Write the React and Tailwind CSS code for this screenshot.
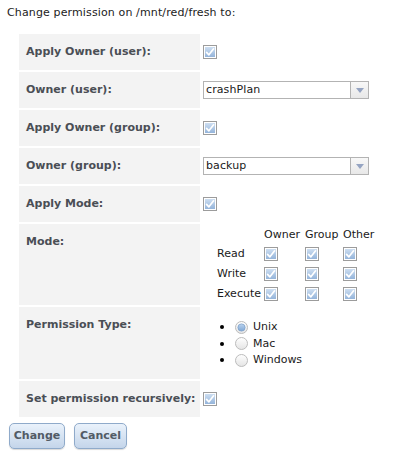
import React from "react";

const FONT = { fontFamily: '"DejaVu Sans", Verdana, sans-serif' };

function Check() {
  return (
    <svg width="14" height="14" viewBox="0 0 14 14" className="block shrink-0">
      <defs>
        <linearGradient id="cbg" x1="0" y1="0" x2="0" y2="1">
          <stop offset="0" stopColor="#cddef1" />
          <stop offset="1" stopColor="#94b4da" />
        </linearGradient>
      </defs>
      <rect x="0.5" y="0.5" width="13" height="13" fill="#fff" stroke="#9c9c9c" />
      <rect x="2" y="2" width="10" height="10" fill="url(#cbg)" />
      <path d="M3.6 7.4 L5.9 9.8 L10.6 3.8" stroke="#fff" strokeWidth="1.7" fill="none" strokeLinecap="round" strokeLinejoin="round" />
    </svg>
  );
}

function Radio({ on }) {
  return (
    <svg width="13" height="13" viewBox="0 0 13 13" className="block shrink-0">
      <defs>
        <linearGradient id="rbg" x1="0" y1="0" x2="0" y2="1">
          <stop offset="0" stopColor="#ffffff" />
          <stop offset="1" stopColor="#e4e4e4" />
        </linearGradient>
        <linearGradient id="rdot" x1="0" y1="0" x2="0" y2="1">
          <stop offset="0" stopColor="#bcd4ef" />
          <stop offset="1" stopColor="#7ea7d5" />
        </linearGradient>
      </defs>
      <circle cx="6.5" cy="6.5" r="6" fill="url(#rbg)" stroke="#bcbcbc" />
      {on && <circle cx="6.5" cy="6.5" r="3.6" fill="url(#rdot)" stroke="#7fa2cc" strokeWidth="0.8" />}
    </svg>
  );
}

function Select({ value }) {
  return (
    <div className="w-[166px] h-[18px] border border-[#b3b3b3] flex bg-white">
      <div className="flex-1 pl-[2px] text-[11px] leading-[16px] tracking-[0.1px] text-[#1a1a1a]">{value}</div>
      <div className="w-[18px] h-full border-l border-[#b3b3b3] bg-gradient-to-b from-[#f8f8f8] to-[#e8e8e8] flex items-center justify-center">
        <svg width="8" height="5" viewBox="0 0 8 5">
          <path d="M0 0 L8 0 L4 5 Z" fill="#95a4c2" />
        </svg>
      </div>
    </div>
  );
}

function Label({ children, h }) {
  return (
    <div className={`bg-[#f3f3f3] pl-[7px] pt-[11px] text-[11px] leading-[14px] font-bold text-[#4a4e55] ${h}`}>
      {children}
    </div>
  );
}

export default function App() {
  return (
    <div className="w-[399px] h-[461px] bg-white text-[#222]" style={FONT}>
      <div className="pl-[7px] pt-[6px] text-[11px] leading-[14px] tracking-[0.13px] text-[#222]">
        Change permission on /mnt/red/fresh to:
      </div>
      <div className="ml-[19px] mt-[14px] grid grid-cols-[181px_1fr] gap-[2px]">
        <Label h="h-[36px]">Apply Owner (user):</Label>
        <div className="flex items-center pl-[1px]"><Check /></div>

        <Label h="h-[36px]">Owner (user):</Label>
        <div className="flex items-center pl-[1px]"><Select value="crashPlan" /></div>

        <Label h="h-[36px]">Apply Owner (group):</Label>
        <div className="flex items-center pl-[1px]"><Check /></div>

        <Label h="h-[36px]">Owner (group):</Label>
        <div className="flex items-center pl-[1px]"><Select value="backup" /></div>

        <Label h="h-[36px]">Apply Mode:</Label>
        <div className="flex items-center pl-[1px]"><Check /></div>

        <Label h="h-[81px]">Mode:</Label>
        <div className="pl-[15px] pt-[2px]">
          <div className="grid grid-cols-[47px_41px_38px_auto] text-[11px] text-[#1a1a1a]">
            <div className="h-[18px]"></div>
            <div className="h-[18px] leading-[18px]">Owner</div>
            <div className="h-[18px] leading-[18px]">Group</div>
            <div className="h-[18px] leading-[18px]">Other</div>
            {["Read", "Write", "Execute"].map((r) => (
              <React.Fragment key={r}>
                <div className="h-[20px] flex items-center">{r}</div>
                <div className="h-[20px] flex items-center"><Check /></div>
                <div className="h-[20px] flex items-center"><Check /></div>
                <div className="h-[20px] flex items-center"><Check /></div>
              </React.Fragment>
            ))}
          </div>
        </div>

        <Label h="h-[72px]">Permission Type:</Label>
        <div className="pl-[18px] pt-[12px] text-[11px] text-[#1a1a1a]">
          {[["Unix", true], ["Mac", false], ["Windows", false]].map(([t, on]) => (
            <div key={t} className="h-[16.5px] flex items-center">
              <div className="w-[4px] h-[4px] rounded-full bg-black"></div>
              <div className="ml-[11px]"><Radio on={on} /></div>
              <div className="ml-[5px]">{t}</div>
            </div>
          ))}
        </div>

        <Label h="h-[36px]">Set permission recursively:</Label>
        <div className="flex items-center pl-[1px]"><Check /></div>
      </div>
      <div className="ml-[9px] mt-[6px] flex gap-[9px]">
        <button className="w-[56px] h-[26px] rounded-[5px] border border-[#8faaca] bg-gradient-to-b from-[#eaf2fb] to-[#c4d5ea] shadow-[0_1px_1px_rgba(0,0,0,0.15)] text-[11px] font-bold text-[#525b66]">
          Change
        </button>
        <button className="w-[53px] h-[26px] rounded-[5px] border border-[#8faaca] bg-gradient-to-b from-[#eaf2fb] to-[#c4d5ea] shadow-[0_1px_1px_rgba(0,0,0,0.15)] text-[11px] font-bold text-[#525b66]">
          Cancel
        </button>
      </div>
    </div>
  );
}
